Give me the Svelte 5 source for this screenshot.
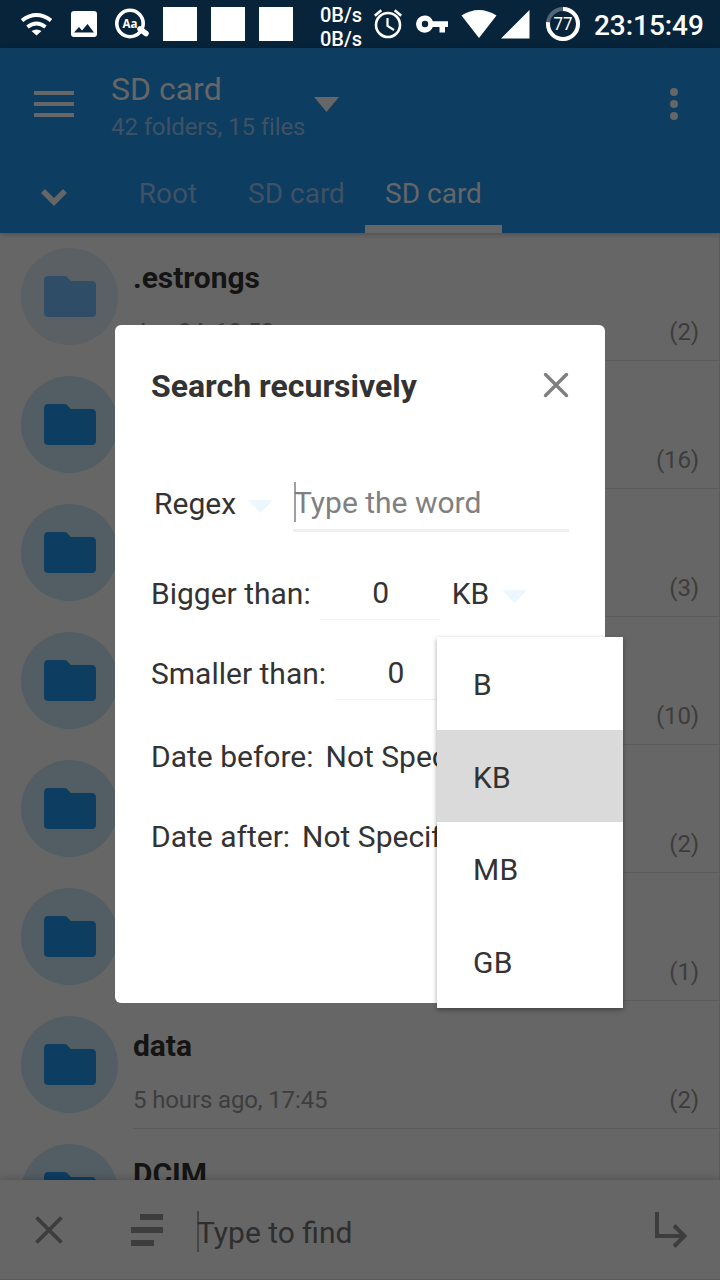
<script>
  const folders = [
    { name: '.estrongs', date: 'Jan 24, 13:53', count: 2, hidden: true },
    { name: '', date: '', count: 16 },
    { name: '', date: '', count: 3 },
    { name: '', date: '', count: 10 },
    { name: '', date: '', count: 2 },
    { name: '', date: '', count: 1 },
    { name: 'data', date: '5 hours ago, 17:45', count: 2 },
    { name: 'DCIM', date: '', count: null }
  ];
  const tabs = ['Root', 'SD card', 'SD card'];
  const units = ['B', 'KB', 'MB', 'GB'];
  let activeTab = $state(2);
  let unit = $state('KB');
</script>

<div class="screen">
  <div class="status">
    <svg class="s-left" width="300" height="48" viewBox="0 0 300 48">
      <g fill="none" stroke="#fff" stroke-width="4">
        <path d="M22 20.5Q36.500 9.500 51 20.500" />
        <path d="M27.500 27Q36.500 20 45.500 27" />
      </g>
      <path fill="#fff" d="M31.500 31Q36.500 28 41.500 31L36.500 35.500Z" />
      <path fill="#fff" fill-rule="evenodd" d="M74 11H94Q97 11 97 14V34Q97 37 94 37H74Q71 37 71 34V14Q71 11 74 11ZM74 32.500H94L87.500 24L82 30.500L79 27Z" />
      <circle cx="130" cy="23.500" r="13.200" fill="none" stroke="#fff" stroke-width="3.600" />
      <path d="M140 29L146 33.500" stroke="#fff" stroke-width="5.500" stroke-linecap="round" />
      <text x="122.500" y="28" textLength="15" lengthAdjust="spacingAndGlyphs" class="aa">Aa</text>
      <path fill="#fff" d="M163 7h34v34h-34zM211 7h34v34h-34zM259 7h34v34h-34z" />
    </svg>
    <div class="speed"><span>0B/s</span><span>0B/s</span></div>
    <svg class="s-right" width="180" height="48" viewBox="370 0 180 48">
      <circle cx="388" cy="25" r="12" fill="none" stroke="#fff" stroke-width="2.600" />
      <path d="M387.500 18V26L394 30" fill="none" stroke="#fff" stroke-width="2.200" />
      <path d="M374.800 15.800L381.300 10.300M394.700 10.300L401.200 15.800" stroke="#fff" stroke-width="2.600" />
      <path fill="#fff" fill-rule="evenodd" d="M432.800 21.200A8.600 8.600 0 1 0 432.800 27H439.500V32.500H445V27H448V21.200ZM425 20.800A3.200 3.200 0 1 1 425 27.200A3.200 3.200 0 1 1 425 20.800Z" />
      <path fill="#fff" d="M461.500 15.500Q479 4.500 496.500 15.500L479 38Z" />
      <path fill="#fff" d="M529.500 10V38.500H501Z" />
    </svg>
    <svg class="battery" width="36" height="48" viewBox="545 0 36 48">
      <circle cx="563" cy="24" r="15" fill="none" stroke="#526676" stroke-width="4" />
      <circle cx="563" cy="24" r="15" fill="none" stroke="#fff" stroke-width="4" pathLength="100" stroke-dasharray="77 23" transform="rotate(-90 563 24)" />
      <text x="553.500" y="30.300" textLength="19" lengthAdjust="spacingAndGlyphs">77</text>
    </svg>
    <span class="clock">23:15:49</span>
  </div>

  <header>
    <div class="bar">
      <svg class="burger" width="40" height="26" viewBox="0 0 40 26"><path fill="#666" d="M0 0h40v4H0zM0 11h40v4H0zM0 22h40v4H0z" /></svg>
      <div class="titles">
        <div class="title">SD card</div>
        <div class="sub">42 folders, 15 files</div>
      </div>
      <svg class="caret" width="25" height="15" viewBox="0 0 25 15"><path fill="#666" d="M0 0H25L12.500 15Z" /></svg>
      <svg class="dots" width="8" height="32" viewBox="0 0 8 32" fill="#666"><circle cx="4" cy="4" r="4" /><circle cx="4" cy="16" r="4" /><circle cx="4" cy="28" r="4" /></svg>
    </div>
    <nav>
      <div class="chev"><svg width="26" height="17" viewBox="0 0 26 17"><path d="M2 2L13 13L24 2" fill="none" stroke="#666" stroke-width="5.500" /></svg></div>
      {#each tabs as tab, i}
        <button class="tab" class:active={i === activeTab} onclick={() => (activeTab = i)}>{tab}</button>
      {/each}
    </nav>
  </header>

  <main>
    {#each folders as f}
      <div class="row" class:hidden={f.hidden}>
        <div class="disc">
          <svg width="52" height="41" viewBox="0 0 52 41"><path d="M4.500 0H20Q22 0 23.200 1.200L27 5H47.500Q52 5 52 9.500V36.500Q52 41 47.500 41H4.500Q0 41 0 36.500V4.500Q0 0 4.500 0Z" /></svg>
        </div>
        <div class="info">
          <div class="name">{f.name}</div>
          <div class="meta"><span>{f.date}</span><span>{f.count === null ? '' : `(${f.count})`}</span></div>
        </div>
      </div>
    {/each}
  </main>

  <footer>
    <svg class="f-close" width="28" height="28" viewBox="0 0 28 28"><path d="M1.500 1.500L26.500 26.500M26.500 1.500L1.500 26.500" stroke="#3d3d3d" stroke-width="3.800" /></svg>
    <svg class="sort" width="32" height="32" viewBox="0 0 32 32"><path fill="#3d3d3d" d="M9 0h23v6H9zM0 13h32v6H0zM0 26h23v6H0z" /></svg>
    <div class="find"><i></i>Type to find</div>
    <svg class="enter" width="33" height="37" viewBox="0 0 33 37"><path d="M3 0V24H29M20 13.500L30.500 24L20 34.500" fill="none" stroke="#3d3d3d" stroke-width="4" /></svg>
  </footer>

  <section class="dialog">
    <div class="head">
      <h1>Search recursively</h1>
      <svg width="26" height="26" viewBox="0 0 26 26"><path d="M2.500 2.500L23.500 23.500M23.500 2.500L2.500 23.500" stroke="#7f7f7f" stroke-width="3.400" stroke-linecap="round" /></svg>
    </div>
    <div class="line regex">
      <span>Regex</span>
      <svg class="drop" width="25" height="13" viewBox="0 0 25 13"><path fill="#ecf6ff" d="M0 0H25L12.500 13Z" /></svg>
      <div class="word"><i></i>Type the word</div>
    </div>
    <div class="line size">
      <span>Bigger than:</span>
      <div class="num">0</div>
      <span class="unit">{unit}</span>
      <svg class="drop" width="25" height="13" viewBox="0 0 25 13"><path fill="#ecf6ff" d="M0 0H25L12.500 13Z" /></svg>
    </div>
    <div class="line size">
      <span>Smaller than:</span>
      <div class="num">0</div>
    </div>
    <div class="line date first"><span>Date before:</span><span>Not Specified</span></div>
    <div class="line date"><span>Date after:</span><span>Not Specified</span></div>
  </section>

  <div class="menu">
    {#each units as u}
      <button class:picked={u === unit} onclick={() => (unit = u)}>{u}</button>
    {/each}
  </div>
</div>

<style>
  :global(body) { background: #666; overflow: hidden; }
  .screen {
    position: relative; width: 720px; height: 1280px; overflow: hidden;
    display: flex; flex-direction: column; background: #666;
    font-family: Roboto, sans-serif; font-size: 30px; color: #333; white-space: nowrap;
  }
  svg { display: block; flex: none; }
  button { border: 0; background: none; padding: 0; margin: 0; font: inherit; color: inherit; text-align: left; }
  .status { height: 48px; flex: none; display: flex; background: #08243a; color: #fff; font-weight: 500; }
  .speed { width: 50px; margin-left: 20px; display: flex; flex-direction: column; font-size: 20px; line-height: 24px; padding-top: 3px; box-sizing: border-box; height: 48px; }
  .battery { margin-left: -5px; }
  .battery text { font-size: 19px; font-weight: 400; fill: #fff; }
  .aa { font: 700 13px "Open Sans", sans-serif; fill: #fff; }
  .clock { margin-left: 13px; font-size: 28px; line-height: 51px; letter-spacing: -.05px; }

  header { height: 185px; flex: none; background: #0d3d61; color: #666; position: relative; box-shadow: 0 1px 6px rgba(0, 0, 0, .25); z-index: 1; }
  .bar { height: 112px; display: flex; align-items: center; }
  .burger { margin-left: 34px; }
  .titles { width: 203px; margin-left: 37px; padding-top: 7px; }
  .title { font-size: 32px; line-height: 38px; }
  .sub { font-size: 24px; line-height: 38px; letter-spacing: -.1px; color: #3f5264; }
  .dots { margin-left: 331px; }
  nav { height: 73px; display: flex; }
  .chev { width: 108px; display: flex; align-items: center; justify-content: center; padding-top: 1px; box-sizing: border-box; }
  .tab { height: 73px; width: 137px; text-align: center; font-size: 28px; line-height: 65px; color: #3f5264; border-bottom: 8px solid transparent; padding-top: 1px; box-sizing: border-box; }
  .tab:nth-of-type(1) { width: 120px; }
  .tab.active { color: #666; border-color: #666; }

  main { height: 947px; flex: none; overflow: hidden; border-right: 1px solid #5b5b5b; box-sizing: border-box; }
  .row { height: 128px; display: flex; }
  .disc { width: 97px; height: 97px; margin: 15px 15px 0 21px; border-radius: 50%; background: #535e64; display: flex; align-items: center; justify-content: center; padding-bottom: 1px; box-sizing: border-box; fill: #0d3d61; }
  .hidden .disc { background: #5b6064; fill: #2f4d66; }
  .info { flex: 1; border-bottom: 1px solid #5b5b5b; box-sizing: border-box; padding: 25px 20px 0 0; height: 128px; }
  .name { height: 40px; line-height: 40px; font-weight: 700; color: #141414; letter-spacing: -.05px; }
  .meta { display: flex; justify-content: space-between; margin-top: 14px; font-size: 24px; line-height: 40px; letter-spacing: -.13px; color: #3d3d3d; }

  footer { height: 100px; flex: none; background: #666; display: flex; align-items: center; box-shadow: 0 -1px 8px rgba(0, 0, 0, .22); position: relative; border-bottom: 1px solid #5f5b5b; box-sizing: border-box; color: #2e2e2e; }
  .f-close { margin-left: 35px; }
  .sort { margin-left: 68px; }
  .find { width: 457px; margin-left: 34px; display: flex; align-items: center; padding-top: 5px; }
  .find i, .word i { width: 2px; height: 41px; background: #464646; margin-right: -2px; }
  .find i { margin-top: -2px; }
  .enter { margin-top: 2px; }

  .dialog { position: absolute; left: 115px; top: 325px; width: 490px; height: 678px; background: #fff; border-radius: 6px; box-sizing: border-box; padding: 36px 36px 0; }
  .head { display: flex; justify-content: space-between; align-items: center; height: 50px; }
  h1 { font-size: 32px; line-height: 50px; margin: 0; font-weight: 700; }
  .head svg { margin-top: -2px; }
  .line { display: flex; align-items: center; height: 80px; }
  .line > span { line-height: 40px; padding-top: 2px; }
  .regex { margin-top: 52px; padding-left: 3px; }
  .regex span { width: 94px; }
  .regex .drop { margin-top: 6px; }
  .word { width: 276px; height: 56px; margin: 1px 0 0 20px; box-sizing: border-box; display: flex; align-items: center; color: #808080; border-bottom: 3px solid #efefef; }
  .word i { background: #a0a0a0; height: 40px; margin-left: 1px; }
  .size { height: 80px; }
  .regex + .size { margin-top: 10px; }
  .num { width: 120px; height: 54px; margin-left: 9px; padding-left: 2px; line-height: 54px; border-bottom: 1px solid #e8f4ff; text-align: center; box-sizing: border-box; }
  .unit { width: 50px; margin-left: 12px; }
  .size .drop { margin-top: 6px; }
  .first { margin-top: 3px; }
  .date span + span { margin-left: 12px; }

  .menu { position: absolute; left: 437px; top: 637px; width: 186px; height: 371px; background: #fff; box-shadow: 0 2px 5px rgba(0, 0, 0, .35); display: grid; grid-template-rows: 93px 92px 93px 93px; }
  .menu button { padding: 2px 0 0 36px; line-height: 91px; overflow: hidden; letter-spacing: .3px; }
  .menu .picked { background: #dadada; }
  .menu button:nth-child(n + 3) { line-height: 92px; }
</style>
